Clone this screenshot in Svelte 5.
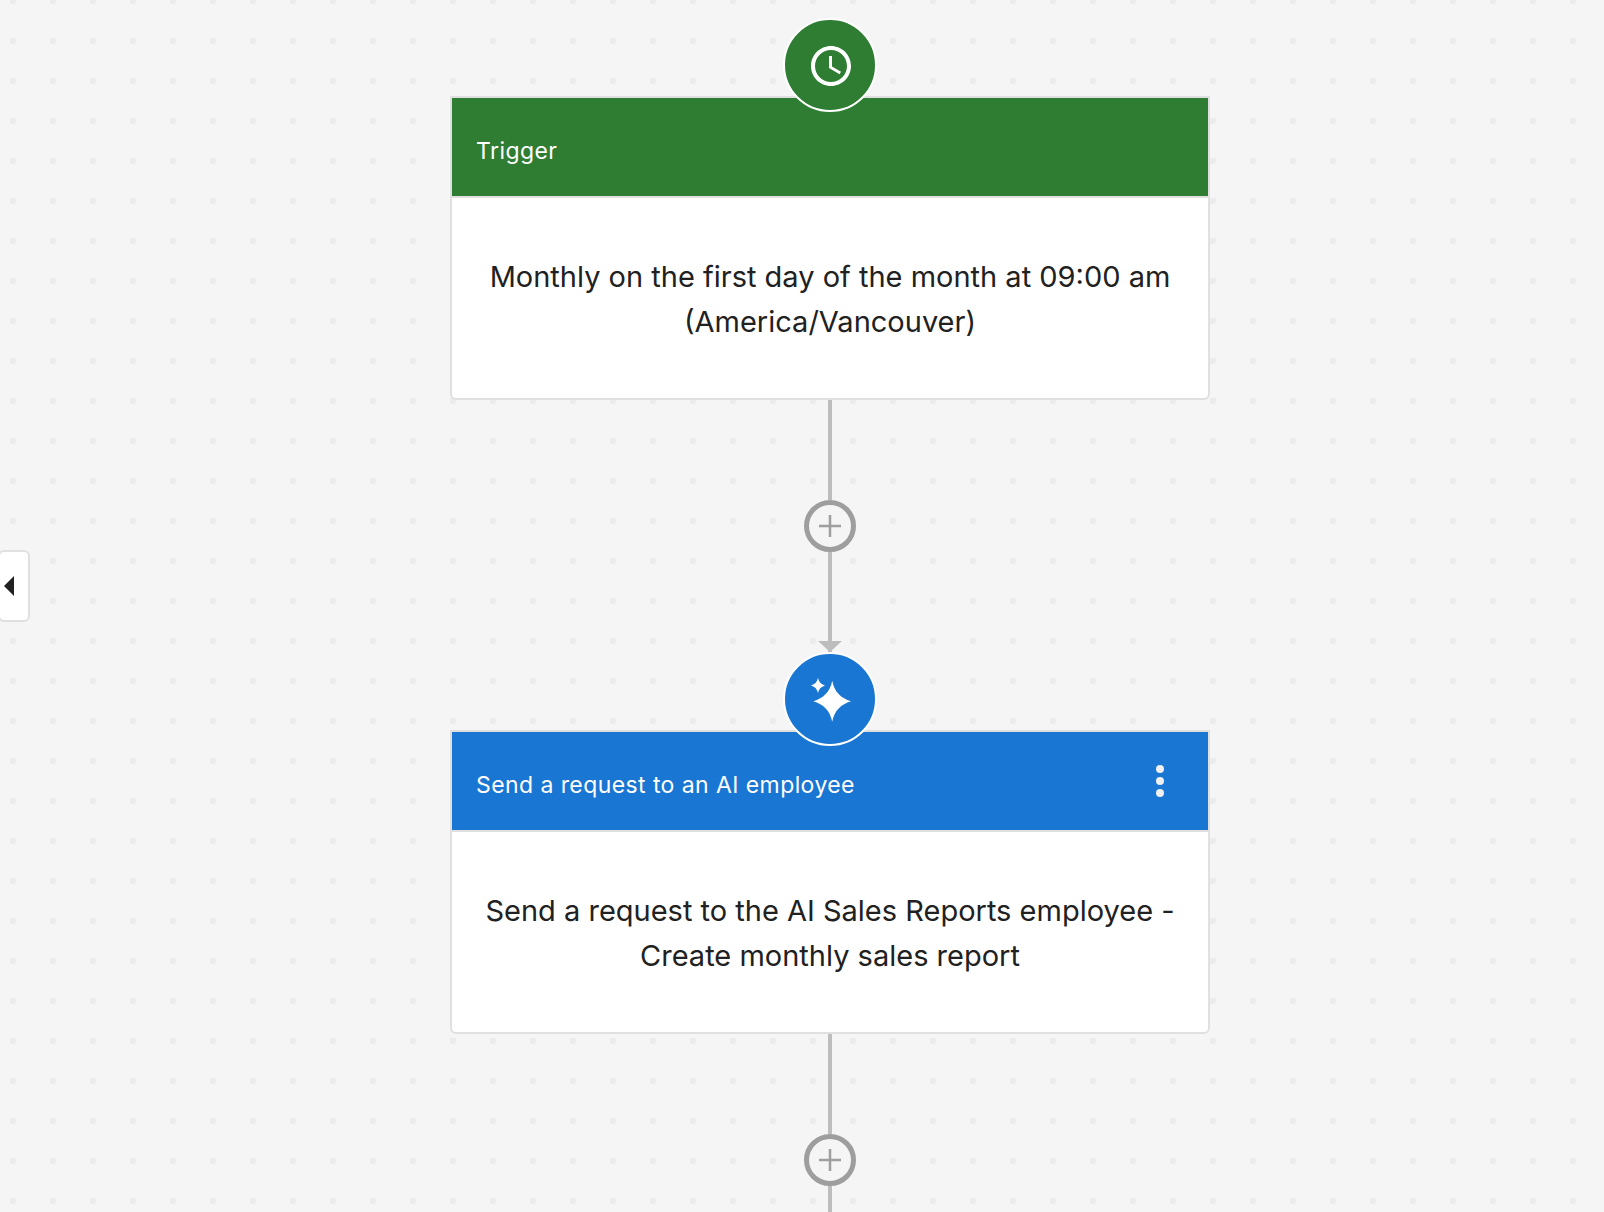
<script lang="ts">
	const steps = [
		{
			kind: 'trigger',
			title: 'Trigger',
			lines: ['Monthly on the first day of the month at 09:00 am', '(America/Vancouver)'],
			menu: false
		},
		{
			kind: 'action',
			title: 'Send a request to an AI employee',
			lines: ['Send a request to the AI Sales Reports employee -', 'Create monthly sales report'],
			menu: true
		}
	];
</script>

<main class="canvas">
	<svg class="dots" width="100%" height="100%" aria-hidden="true">
		<defs>
			<pattern id="dot-grid" width="40" height="40" patternUnits="userSpaceOnUse">
				<path d="M10 38h6v3a3 3 0 0 1-3 3h-2l-1-1zM10-2h6v3a3 3 0 0 1-3 3h-2l-1-1z" fill="#ebebeb" />
			</pattern>
		</defs>
		<rect width="100%" height="100%" fill="url(#dot-grid)" />
	</svg>

	<button class="side-tab" aria-label="Toggle panel"><span class="side-tab__arrow"></span></button>

	<div class="flow">
		{#each steps as step, i}
			<section class="step {step.kind}">
				<div class="step__badge">
					{#if step.kind === 'trigger'}
						<svg width="48" height="48" viewBox="-.5 -.5 24 24" fill="#fff">
							<path d="M11.99 2C6.47 2 2 6.48 2 12s4.47 10 9.99 10C17.52 22 22 17.52 22 12S17.52 2 11.99 2zM12 20c-4.42 0-8-3.58-8-8s3.58-8 8-8 8 3.58 8 8-3.58 8-8 8zm.5-13H11v6l5.25 3.15.75-1.23-4.5-2.67z" />
						</svg>
					{:else}
						<svg width="48" height="48" viewBox="0 0 48 48" fill="#fff">
							<path d="M26.2 5.7C28.4 17 35 23.2 45 26.2 35 29.2 28.4 35.4 26.2 46.7 24 35.4 17.4 29.2 7.3 26.2 17.4 23.2 24 17 26.2 5.7z" />
							<path d="M12 3C12.8 6.8 14.8 9.2 19 10.5 14.8 11.8 12.8 14.2 12 18 11.2 14.2 9.2 11.8 5 10.5 9.2 9.2 11.2 6.8 12 3z" />
						</svg>
					{/if}
				</div>
				<header class="step__head">
					<span class="step__title">{step.title}</span>
					{#if step.menu}
						<svg class="step__menu" width="48" height="48" viewBox="0 0 24 24" fill="#f0f0f0">
							<circle cx="12" cy="6" r="2" />
							<circle cx="12" cy="12" r="2" />
							<circle cx="12" cy="18" r="2" />
						</svg>
					{/if}
				</header>
				<div class="step__body">
					{#each step.lines as line}
						<p>{line}</p>
					{/each}
				</div>
			</section>

			<div class="connector" class:connector--last={i === steps.length - 1}>
				<span class="connector__line"></span>
				<button class="connector__add" aria-label="Add step">
					<svg width="24" height="24" viewBox="0 0 24 24" stroke="#9e9e9e" stroke-width="2.5" fill="none">
						<path d="M12 1v22M1 12h22" />
					</svg>
				</button>
				<span class="connector__line"></span>
				{#if i < steps.length - 1}
					<span class="connector__arrow"></span>
				{/if}
			</div>
		{/each}
	</div>
</main>

<style>
	:global(body) {
		margin: 0;
		background: #f5f5f5;
	}

	.canvas {
		position: relative;
		height: 1212px;
		overflow: hidden;
		background: #f5f5f5;
		font-family: Inter, 'Liberation Sans', sans-serif;
		color: #212121;
	}

	.dots {
		position: absolute;
		inset: 0;
	}

	.side-tab {
		position: absolute;
		left: -2px;
		top: 550px;
		width: 32px;
		height: 72px;
		padding: 0 0 0 4px;
		display: flex;
		align-items: center;
		box-sizing: border-box;
		background: #fff;
		border: 2px solid #e0e0e0;
		border-radius: 6px;
	}

	.side-tab__arrow {
		width: 0;
		height: 0;
		border-style: solid;
		border-width: 10px 10px 10px 0;
		border-color: transparent #212121 transparent transparent;
	}

	.flow {
		position: relative;
		display: flex;
		flex-direction: column;
		align-items: center;
		padding: 96px 0 0 56px;
	}

	.step {
		position: relative;
		box-sizing: border-box;
		width: 760px;
		height: 304px;
		background: #fff;
		border: 2px solid #e0e0e0;
		border-radius: 0 0 6px 6px;
	}

	.step__badge {
		position: absolute;
		left: 50%;
		top: -80px;
		width: 90px;
		height: 90px;
		margin-left: -47px;
		display: flex;
		align-items: center;
		justify-content: center;
		border: 2px solid #fff;
		border-radius: 50%;
		z-index: 1;
	}

	.step__head {
		display: flex;
		align-items: center;
		justify-content: space-between;
		box-sizing: border-box;
		height: 100px;
		padding: 0 24px;
		border-bottom: 2px solid #e0e0e0;
		color: #fff;
	}

	.trigger .step__head,
	.trigger .step__badge {
		background-color: #2e7d32;
	}

	.action .step__head,
	.action .step__badge {
		background-color: #1976d2;
	}

	.step__title {
		padding-top: 8px;
		font-size: 23px;
		line-height: 32px;
		letter-spacing: 0.42px;
	}

	.step__body {
		padding-top: 56px;
		font-size: 29px;
		line-height: 45px;
		text-align: center;
	}

	.step__body p {
		margin: 0;
	}

	.connector {
		position: relative;
		display: flex;
		flex-direction: column;
		align-items: center;
		height: 330px;
	}

	.connector--last {
		height: 178px;
	}

	.connector__line {
		flex: 1;
		width: 4px;
		background: #bdbdbd;
	}

	.connector__line:first-child {
		flex: 0 0 100px;
	}

	.connector__add {
		flex: none;
		box-sizing: border-box;
		width: 52px;
		height: 52px;
		padding: 0;
		display: flex;
		align-items: center;
		justify-content: center;
		background: #f5f5f5;
		border: 5px solid #9e9e9e;
		border-radius: 50%;
	}

	.connector__arrow {
		position: absolute;
		left: 50%;
		top: 241px;
		margin-left: -12px;
		width: 0;
		height: 0;
		border-style: solid;
		border-width: 11px 12px 0;
		border-color: #bdbdbd transparent transparent;
	}
</style>
